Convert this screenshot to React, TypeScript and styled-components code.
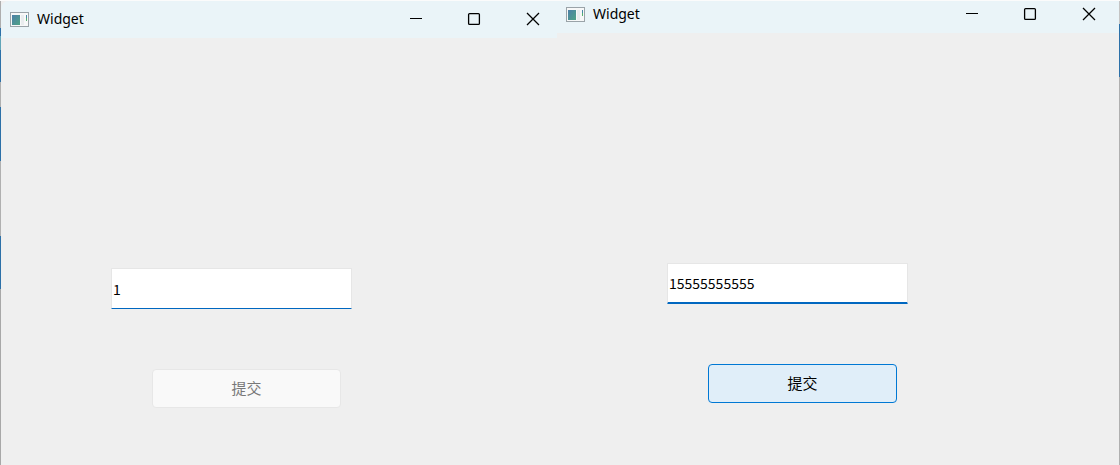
import React, { useState } from "react";
import styled, { createGlobalStyle } from "styled-components";

const GlobalStyle = createGlobalStyle`
  * { box-sizing: border-box; }
  body { margin: 0; background: #efefef; }
`;

const Desktop = styled.main`
  display: grid;
  grid-template-columns: 557fr 563fr;
  min-height: 100vh;
  border-top: 1px solid #fbfbfb;
  background: #efefef;
`;

const Window = styled.section<{ $side: "left" | "right" }>`
  display: flex;
  flex-direction: column;
  min-width: 0;
  background: #efefef;
  border: 0 solid;
  ${({ $side }) =>
    $side === "left"
      ? `border-left-width: 1px;
         border-image: linear-gradient(#aeaeae 28px, #2c70a8 28px, #2c70a8 36px, #62a5b8 36px, #62a5b8 50px, #2c70a8 50px, #2c70a8 82px,
           #b0b0b0 82px, #b0b0b0 107px, #2c70a8 107px, #2c70a8 160px, #b0b0b0 160px, #b0b0b0 235px,
           #2c70a8 235px, #2c70a8 288px, #a8a8a8 288px) 1;`
      : `border-right-width: 1px;
         border-image: linear-gradient(#c4c4c4 24px, #2c70a8 24px, #2c70a8 77px, #b0b0b0 77px) 1;`}
`;

const TitleBar = styled.header<{ $side: "left" | "right" }>`
  display: flex;
  align-items: center;
  background: #eaf4f8;
  ${({ $side }) =>
    $side === "left"
      ? `height: 37px;
         padding: 0 0 1px 8px;
         border-top-left-radius: 8px;`
      : `height: 32px;
         padding: 0 6px 6px 8px;`}
`;

const Title = styled.h1`
  flex: 1;
  margin: 0 0 0 8px;
  font: 400 14px/20px "Noto Sans", sans-serif;
  color: #000;
`;

const CaptionButton = styled.button`
  display: grid;
  place-items: center;
  width: 58px;
  height: 100%;
  padding: 0;
  border: 0;
  background: transparent;
  color: #000;

  &:last-child {
    width: 48px;
    margin-left: 6px;
  }
`;

const Form = styled.form`
  display: flex;
  flex-direction: column;
  gap: 60px;
  width: 351px;
  padding: 230px 0 56px 110px;
`;

const Field = styled.input<{ $active: boolean }>`
  width: 241px;
  height: 41px;
  padding: 0 1px;
  border: 1px solid #e6e6e6;
  border-bottom: ${({ $active }) => ($active ? 2 : 1)}px solid #0067c0;
  border-radius: 1px;
  outline: 0;
  background: #fff;
  color: #000;
  font: 400 14px/20px "Noto Sans CJK SC", sans-serif;
`;

const Submit = styled.button`
  width: 189px;
  height: 39px;
  margin-left: 41px;
  padding: 0 0 2px;
  border: 1px solid #0078d4;
  border-radius: 4px;
  background: #e0eef9;
  color: #000;
  font: 400 15px/20px "Noto Sans CJK SC", sans-serif;

  &:disabled {
    border-color: #e7e7e7;
    background: #f9f9f9;
    color: #787878;
  }
`;

function AppIcon() {
  return (
    <svg width="20" height="16" viewBox="0 0 20 16" aria-hidden="true">
      <defs>
        <linearGradient id="pane" x1="0" y1="0" x2="1" y2="1">
          <stop offset="0" stopColor="#4c7fa8" />
          <stop offset="1" stopColor="#4fa386" />
        </linearGradient>
      </defs>
      <rect x="1.5" y="1.5" width="18" height="14" fill="#f7f8f8" stroke="#9aa3a8" />
      <rect x="3" y="4" width="8" height="10" fill="url(#pane)" />
      <rect x="12" y="4" width="3" height="10" fill="#e9ecee" />
      <rect x="17" y="4" width="1" height="3" fill="#4788a8" />
      <rect x="17" y="7" width="1" height="3" fill="#54b070" />
    </svg>
  );
}

function Caption({ label, children }: { label: string; children: React.ReactNode }) {
  return (
    <CaptionButton type="button" aria-label={label}>
      <svg width="14" height="14" viewBox="0 0 14 14" fill="none" stroke="currentColor" strokeWidth="1.3">
        {children}
      </svg>
    </CaptionButton>
  );
}

interface WidgetProps {
  side: "left" | "right";
  initial: string;
}

function Widget({ side, initial }: WidgetProps) {
  const [value, setValue] = useState(initial);
  const complete = value.length === 11;
  return (
    <Window $side={side}>
      <TitleBar $side={side}>
        <AppIcon />
        <Title>Widget</Title>
        <Caption label="Minimize"><path d="M1 6.5h12" strokeWidth="1" /></Caption>
        <Caption label="Maximize"><rect x="1.6" y="1.6" width="10.8" height="10.8" rx="1" /></Caption>
        <Caption label="Close"><path d="M1 1l12 12M13 1L1 13" /></Caption>
      </TitleBar>
      <Form onSubmit={(e) => e.preventDefault()}>
        <Field
          aria-label="Number"
          $active={complete}
          value={value}
          onChange={(e) => setValue(e.target.value)}
        />
        <Submit disabled={!complete}>提交</Submit>
      </Form>
    </Window>
  );
}

export default function App() {
  return (
    <>
      <GlobalStyle />
      <Desktop>
        <Widget side="left" initial="1" />
        <Widget side="right" initial="15555555555" />
      </Desktop>
    </>
  );
}
